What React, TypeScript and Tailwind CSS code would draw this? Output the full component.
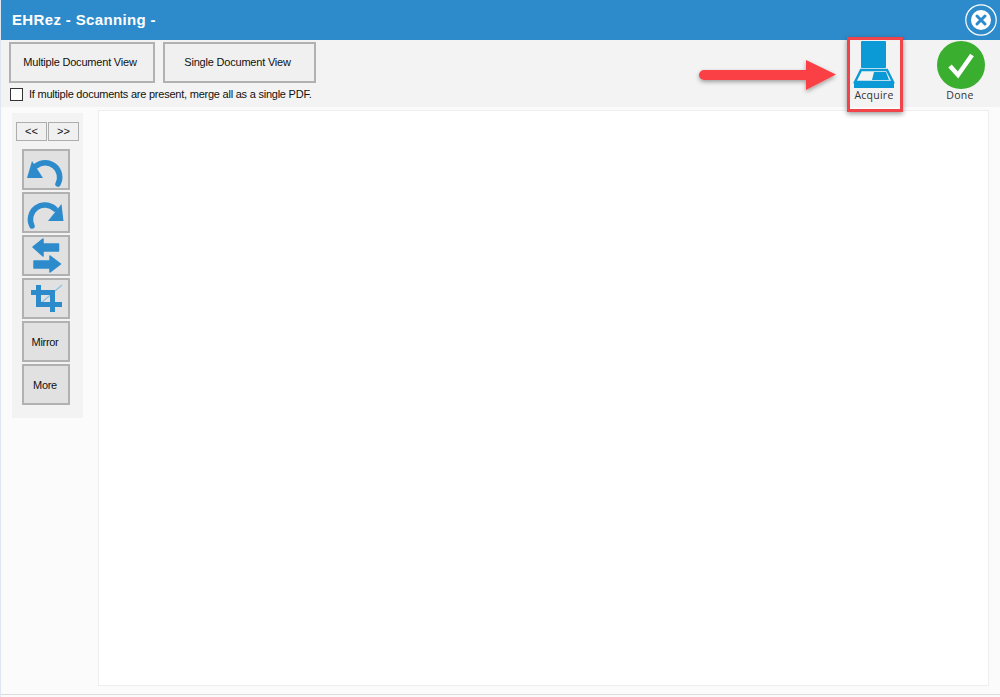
const toolBtn = "w-12 h-[41px] bg-[#e1e1e1] border-2 border-[#b1b1b1] flex items-center justify-center";
const toolLabel = "text-[11px] tracking-[-0.3px] pr-0.5 pt-px";
const viewBtn = "h-[41px] bg-[#f0f0f0] border-2 border-[#b1b1b1] flex items-center justify-center text-[11px] tracking-[-0.2px] pr-1";
const navBtn = "w-[31px] h-[19px] bg-[#f0f0f0] border border-[#adadad] flex items-center justify-center text-[11px]";

const UndoIcon = () => (
  <svg viewBox="0 0 44 37" className="w-11 h-[37px] shrink-0">
    <path d="M12 15 A14.5 14.5 0 0 1 34 33" fill="none" stroke="#2e8bcb" strokeWidth="5.5" strokeLinecap="round" />
    <path d="M3 27 L8 10 L19 27 Z" fill="#2e8bcb" />
  </svg>
);

const RedoIcon = () => (
  <svg viewBox="0 0 44 37" className="w-11 h-[37px] shrink-0">
    <path d="M8 32 A14.5 14.5 0 0 1 31 15" fill="none" stroke="#2e8bcb" strokeWidth="5.5" strokeLinecap="round" />
    <path d="M39.5 27 L37.5 10 L24 27 Z" fill="#2e8bcb" />
  </svg>
);

const SwapIcon = () => (
  <svg viewBox="0 0 44 37" className="w-11 h-[37px] shrink-0">
    <path d="M9 10 L19 2 V7 H34.5 V14 H19 V19 Z" fill="#2e8bcb" stroke="#2e8bcb" strokeWidth="1.5" strokeLinejoin="round" />
    <path d="M36.5 27 L26 19 V24 H10 V31 H26 V35 Z" fill="#2e8bcb" stroke="#2e8bcb" strokeWidth="1.5" strokeLinejoin="round" />
  </svg>
);

const CropIcon = () => (
  <svg viewBox="0 0 44 37" className="w-11 h-[37px] shrink-0">
    <path d="M17 23 L38 5" fill="none" stroke="#8fbfe3" strokeWidth="1.2" />
    <path d="M12 5 H17 V10 H31 V22 H38 V27 H31 V32 H26 V27 H12 V15 H7 V10 H12 Z M17 15 V22 H26 V15 Z" fill="#2e8bcb" fillRule="evenodd" />
  </svg>
);

const ScannerIcon = () => (
  <svg viewBox="0 0 42 48" className="w-[42px] h-[48px]">
    <rect x="8" y="0" width="25" height="27" rx="1" fill="#0b9ad6" />
    <path d="M8 29 H34 L40 41 H2 Z" fill="none" stroke="#0b9ad6" strokeWidth="2.4" />
    <path d="M21 31 H33 L36 39 H19 Z" fill="#0b9ad6" />
    <rect x="1" y="42" width="40" height="5" fill="#0b9ad6" />
  </svg>
);

const CheckIcon = () => (
  <svg viewBox="0 0 48 48" className="w-12 h-12">
    <circle cx="24" cy="24" r="24" fill="#3aae2f" />
    <path d="M13 25 L21 34 L35 14" fill="none" stroke="#ffffff" strokeWidth="4.5" />
  </svg>
);

const CloseIcon = () => (
  <svg viewBox="0 0 32 32" className="w-8 h-8">
    <circle cx="16" cy="16" r="15.2" fill="none" stroke="#ffffff" strokeWidth="1.2" />
    <circle cx="16" cy="16" r="10" fill="#ffffff" />
    <path d="M12 12 L20 20 M20 12 L12 20" stroke="#2e8bcb" strokeWidth="3" strokeLinecap="round" />
  </svg>
);

export default function App() {
  return (
    <div className="relative w-[1000px] h-[697px] overflow-hidden bg-[#fbfbfb] border-l border-[#dde7f2] flex flex-col font-['Liberation_Sans',sans-serif] text-[#111]">
      <header className="h-10 bg-[#2e8bcb] flex items-center justify-between pl-[11px] pr-[3px]">
        <span className="text-white text-[15px] font-bold tracking-[0.35px]">EHRez - Scanning -</span>
        <CloseIcon />
      </header>

      <div className="h-[67px] bg-[#f3f3f3] flex justify-between">
        <div className="pl-2 pt-0.5">
          <div className="flex gap-2">
            <button className={`${viewBtn} w-[146px]`}>Multiple Document View</button>
            <button className={`${viewBtn} w-[153px]`}>Single Document View</button>
          </div>
          <label className="flex items-center gap-[6px] mt-1 ml-px text-[11px] leading-[14px] tracking-[-0.23px]">
            <span className="w-[13px] h-[13px] bg-white border border-[#333]" />
            If multiple documents are present, merge all as a single PDF.
          </label>
        </div>
        <div className="flex items-start">
          <div className="w-[42px] mt-px flex flex-col items-center mr-[42px]">
            <ScannerIcon />
            <span className="text-[10.5px] leading-3 font-['Open_Sans',sans-serif] text-[#333] tracking-[0.25px]">Acquire</span>
          </div>
          <div className="w-12 mt-px flex flex-col items-center mr-[15px]">
            <CheckIcon />
            <span className="text-[10.5px] leading-3 font-['Open_Sans',sans-serif] text-[#333] tracking-[0.25px] pr-0.5">Done</span>
          </div>
        </div>
      </div>

      <div className="flex-1 flex pl-[11px] pr-[11px] pt-[3px]">
        <aside className="w-[71px] h-[305px] mt-[3px] bg-[#f3f3f3] flex flex-col items-start pt-[9px]">
          <div className="flex gap-px ml-1">
            <button className={navBtn}>&lt;&lt;</button>
            <button className={navBtn}>&gt;&gt;</button>
          </div>
          <div className="flex flex-col gap-0.5 mt-2 ml-2.5">
            <button className={toolBtn}><UndoIcon /></button>
            <button className={toolBtn}><RedoIcon /></button>
            <button className={toolBtn}><SwapIcon /></button>
            <button className={toolBtn}><CropIcon /></button>
            <button className={toolBtn}><span className={toolLabel}>Mirror</span></button>
            <button className={toolBtn}><span className={toolLabel}>More</span></button>
          </div>
        </aside>
        <main className="ml-[15px] w-[891px] h-[576px] bg-white border border-[#eeeeee]" />
      </div>
      <div className="h-[3px] border-t border-[#dcdcdc]" />

      {/* annotation drawn over the screenshot */}
      <svg className="absolute left-[689px] top-[50px] w-[160px] h-[50px]" viewBox="0 0 160 50">
        <defs>
          <filter id="arrowShadow" x="-10%" y="-30%" width="120%" height="170%">
            <feDropShadow dx="0" dy="2" stdDeviation="2" floodColor="#000" floodOpacity="0.35" />
          </filter>
        </defs>
        <path d="M14 20 H116 V10 L146 24.5 L116 40 V30 H14 A5 5 0 0 1 14 20 Z" fill="#fb4044" filter="url(#arrowShadow)" />
      </svg>
      <div className="absolute left-[846px] top-[37px] w-[56px] h-[75px] border-[3px] border-[#f0434a] shadow-[0_2px_5px_rgba(0,0,0,0.4)]" />
    </div>
  );
}
